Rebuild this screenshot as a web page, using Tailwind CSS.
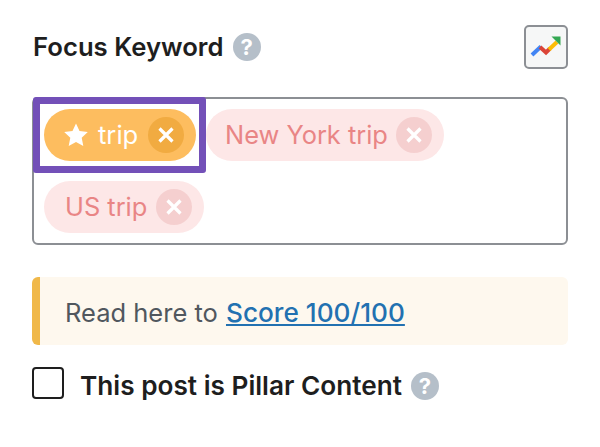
<!DOCTYPE html>
<html lang="en">
<head>
    <meta charset="UTF-8">
    <title>Focus Keyword</title>
    <script src="https://cdn.jsdelivr.net/npm/@tailwindcss/browser@4"></script>
</head>
<body class="bg-white font-['Inter',sans-serif] w-[600px] h-[447px] overflow-hidden">
    <div class="w-[536px] ml-8 pt-[25px]">

        <!-- heading -->
        <div class="flex justify-between items-center h-[44px]">
            <div class="flex items-center gap-[9px]">
                <h2 class="text-[25.7px] leading-[30px] font-semibold text-[#1e1e1e] ml-px">Focus Keyword</h2>
                <span class="w-7 h-7 rounded-full bg-[#b5bfc9] text-white flex items-center justify-center text-[22px] font-bold leading-none">?</span>
            </div>
            <button class="w-11 h-11 rounded-[5px] border-2 border-[#8c8f94] bg-[#f6f7f7] flex items-center justify-center">
                <svg class="w-[32px] h-[24px]" viewBox="0 0 32 24" fill="none">
                    <path d="M2 20 L11 11.5" stroke="#4285f4" stroke-width="4"/>
                    <path d="M10 12 L16 17.5 L20 13.5" stroke="#db4437" stroke-width="4"/>
                    <path d="M19 14.5 L27 7" stroke="#fbbc04" stroke-width="4"/>
                    <path d="M21.5 1.5 H30.5 V10.5 Z" fill="#34a853"/>
                </svg>
            </button>
        </div>

        <!-- tags box -->
        <div class="relative mt-[28px] h-[148px] rounded-[6px] border-2 border-[#8c8f94] pl-[10px] pr-2 pt-[10px] flex flex-wrap content-start gap-x-[10px] gap-y-5">
            <div class="flex items-center h-[52px] w-[152px] rounded-full bg-[#fdbd5f] pl-[20px] pr-3 text-white text-[25.6px] leading-none">
                <svg class="w-[24px] h-[24px] mr-[10px] shrink-0" viewBox="0 0 24 24" fill="#fff"><path d="M12 .5 L15.5 8 L23.8 9 L17.7 14.7 L19.3 23 L12 18.9 L4.7 23 L6.3 14.7 L.2 9 L8.5 8 Z"/></svg>
                <span>trip</span>
                <span class="ml-auto w-9 h-9 rounded-full bg-[#f1ab41] flex items-center justify-center">
                    <svg class="w-4 h-4" viewBox="0 0 16 16" stroke="#fff" stroke-width="3.2"><path d="M1.5 1.5 L14.5 14.5 M14.5 1.5 L1.5 14.5"/></svg>
                </span>
            </div>
            <div class="flex items-center h-[52px] w-[238px] rounded-full bg-[#fde7e7] pl-[19px] pr-3 text-[#e98585] text-[25.4px] leading-none">
                <span>New York trip</span>
                <span class="ml-auto w-9 h-9 rounded-full bg-[#f5cfcf] flex items-center justify-center">
                    <svg class="w-4 h-4" viewBox="0 0 16 16" stroke="#fff" stroke-width="3.2"><path d="M1.5 1.5 L14.5 14.5 M14.5 1.5 L1.5 14.5"/></svg>
                </span>
            </div>
            <div class="flex items-center h-[52px] w-[160px] rounded-full bg-[#fde7e7] pl-[21px] pr-3 text-[#e98585] text-[25.4px] leading-none">
                <span>US trip</span>
                <span class="ml-auto w-9 h-9 rounded-full bg-[#f5cfcf] flex items-center justify-center">
                    <svg class="w-4 h-4" viewBox="0 0 16 16" stroke="#fff" stroke-width="3.2"><path d="M1.5 1.5 L14.5 14.5 M14.5 1.5 L1.5 14.5"/></svg>
                </span>
            </div>
            <!-- highlight frame over first tag -->
            <div class="absolute left-[-1px] top-[-2px] w-[173px] h-[76px] rounded-[3px] border-[7px] border-[#7350b8]"></div>
        </div>

        <!-- notice -->
        <div class="mt-8 h-[68px] rounded-[6px] bg-[#fef8ee] border-l-8 border-[#f0b849] pl-[25px] flex items-center text-[25.5px] text-[#50575e]">
            <span class="mt-[3px]">Read here to <a href="#" class="ml-px text-[#2271b1] text-[26.2px] font-medium underline">Score 100/100</a></span>
        </div>

        <!-- pillar checkbox -->
        <div class="flex items-center mt-[22px] h-8">
            <span class="w-8 h-8 rounded-[4px] border-2 border-[#1e1e1e] bg-white shrink-0"></span>
            <span class="ml-4 text-[26.2px] leading-[30px] font-semibold text-[#1e1e1e] mt-[6px]">This post is Pillar Content</span>
            <span class="ml-[9px] mt-[6px] w-7 h-7 rounded-full bg-[#b5bfc9] text-white flex items-center justify-center text-[22px] font-bold leading-none">?</span>
        </div>
    </div>
</body>
</html>
